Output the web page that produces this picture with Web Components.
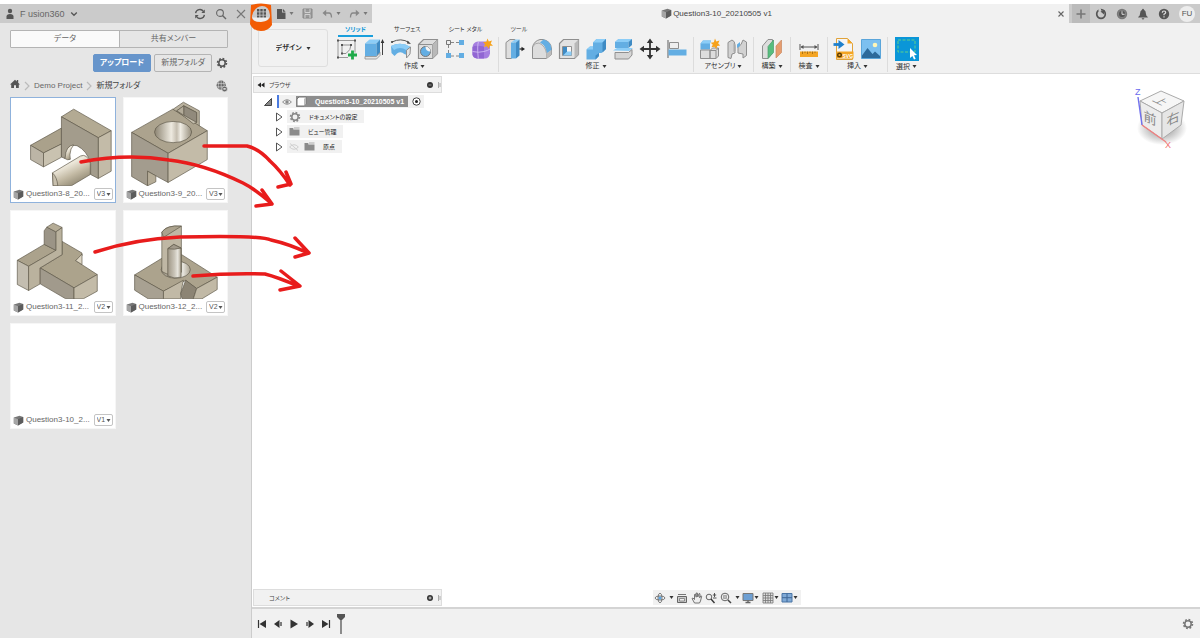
<!DOCTYPE html>
<html lang="ja">
<head>
<meta charset="utf-8">
<title>Question3-10_20210505 v1</title>
<style>
html, body {
	margin: 0;
	height: 100%;
}
body {
	font-family: "Liberation Sans", "Noto Sans CJK JP", sans-serif;
	font-size: 8px;
	line-height: 12px;
	font-feature-settings: "palt";
	color: #666;
	background: #fff;
	overflow: hidden;
}
</style>
</head>
<body>
<cad-app></cad-app>

<script>
const BASE = `
:host, * {
	box-sizing: border-box;
}
button, select {
	font: inherit;
	font-feature-settings: inherit;
	color: inherit;
	background: none;
	border: 0;
	padding: 0;
	margin: 0;
	appearance: none;
}
button {
	display: inline-flex;
	align-items: center;
	justify-content: center;
}
a {
	color: inherit;
	text-decoration: none;
}
`;

const g = '#8f8f8f';
const blue = '#63aee3';

// name: [width, height, markup]
const ICONS = {
	user: [10, 12, `<circle cx="5" cy="3" r="2.2" fill="#555"/><path d="M1.5 11V8.5Q1.5 6 5 6T8.5 8.5V11Z" fill="#555"/>`],
	chevron: [8, 8, `<path d="M1.2 2.5 4 5.3 6.8 2.5" fill="none" stroke="#555" stroke-width="1.3"/>`],
	caret: [5, 5, `<path d="M.5 1h4L2.5 4Z" fill="currentColor"/>`],
	refresh: [12, 12, `<path d="M1.6 5.2A4.3 4.3 0 0 1 9.4 3.4M10.4 6.8A4.3 4.3 0 0 1 2.6 8.6" fill="none" stroke="#555" stroke-width="1.3"/><path d="M10.8 1.5V5H7.3ZM1.2 10.5V7h3.5Z" fill="#555"/>`],
	search: [12, 12, `<circle cx="5" cy="5" r="3.4" fill="none" stroke="#666" stroke-width="1.1"/><path d="m7.5 7.5 3.5 3.5" stroke="#666" stroke-width="1.4"/>`],
	close: [10, 10, `<path d="m1 1 8 8M9 1 1 9" stroke="#777" stroke-width="1.1"/>`],
	tabclose: [8, 8, `<path d="m1.5 1.5 5 5M6.5 1.5l-5 5" stroke="#666" stroke-width="1.1"/>`],
	gear: [12, 12, `<g stroke="currentColor" fill="none"><circle cx="6" cy="6" r="4.4" stroke-width="1.7" stroke-dasharray="1.75 1.7"/><circle cx="6" cy="6" r="3.2" stroke-width="1.5"/></g>`],
	home: [10, 10, `<path d="M0 5.4 5 .8l1.8 1.6V1h1.4v2.8L10 5.4H8.8V9H6V6.2H4V9H1.2V5.4Z" fill="#555"/>`],
	sep: [6, 10, `<path d="m1 1 4 4-4 4" fill="none" stroke="#bbb" stroke-width="1.2"/>`],
	globe: [12, 12, `<circle cx="5.2" cy="5.2" r="4.6" fill="#666"/><path d="M.8 3.6h8.8M.8 6.8h8.8M5.2.6v9.2M3 1Q1.6 5.2 3 9.4M7.4 1Q8.8 5.2 7.4 9.4" stroke="#ddd" stroke-width=".6" fill="none"/><circle cx="8.6" cy="9" r="2.8" fill="#666" stroke="#e6e6e6" stroke-width=".6"/><path d="M6.8 9Q8.6 7.2 10.4 9 8.6 10.6 6.8 9Z" fill="#ddd"/>`],
	cube: [11, 11, `<path d="M.8 2.6 6.5.8 10.2 2v5.5L5 10.6.8 8.5Z" fill="#777"/><path d="M.8 2.6 5 4.2v6.4L.8 8.5Z" fill="#a5a5a5"/><path d="M5 4.2 10.2 2v5.5L5 10.6Z" fill="#5c5c5c"/>`],
	grid: [11, 11, `<path d="M1 1h2.4v2.4H1ZM4.3 1h2.4v2.4H4.3ZM7.6 1H10v2.4H7.6ZM1 4.3h2.4v2.4H1ZM4.3 4.3h2.4v2.4H4.3ZM7.6 4.3H10v2.4H7.6ZM1 7.6h2.4V10H1ZM4.3 7.6h2.4V10H4.3ZM7.6 7.6H10V10H7.6Z" fill="#555"/>`],
	file: [10, 12, `<path d="M1 1h5v3.5h3.500V11H1Z" fill="#555"/><path d="M6.8.8 9.6 3.7H6.8Z" fill="#555"/>`],
	save: [11, 11, `<path d="M1 1h9v9H1Z" fill="#9a9a9a" stroke="#888"/><path d="M3 1v3.500h5V1M3 10V6.500h5V10" fill="none" stroke="#d0d0d0"/>`],
	undo: [11, 10, `<path d="M2 4h5q2.500 0 2.500 4.500" fill="none" stroke="#888" stroke-width="1.3"/><path d="M.5 4 4.2.8v6.4Z" fill="#888"/>`],
	redo: [11, 10, `<path d="M9 4H4Q1.500 4 1.500 8.500" fill="none" stroke="#888" stroke-width="1.3"/><path d="M10.500 4 6.8.8v6.4Z" fill="#888"/>`],
	plus: [10, 10, `<path d="M5 .5v9M.5 5h9" stroke="#777" stroke-width="1.6"/>`],
	ext: [12, 12, `<circle cx="6" cy="6" r="4.3" fill="none" stroke="#555" stroke-width="1.7"/><path d="M3.500 1h2.500v2.500H3.500Z" fill="#cbcbcb"/><path d="M5.500 3.500 9.500 2l-.5 4.500Z" fill="#555"/>`],
	clock: [12, 12, `<circle cx="6" cy="6" r="5.2" fill="#777"/><circle cx="6" cy="6" r="3.7" fill="#555" stroke="#999" stroke-width=".6"/><path d="M6 3.2V6.3h2.6" fill="none" stroke="#ddd"/>`],
	bell: [12, 12, `<path d="M6 .8q.9 0 .9 1Q9 2.6 9 6q0 2 1.800 3v.6H1.200V9Q3 8 3 6q0-3.400 2.100-4.200Q5.100.8 6 .8ZM4.600 10.200h2.800Q7 11.400 6 11.400T4.600 10.200Z" fill="#555"/>`],
	help: [12, 12, `<circle cx="6" cy="6" r="5.2" fill="#555"/><path d="M4.300 4.800Q4.300 3 6 3t1.700 1.500Q7.700 5.500 6 6.300v.9" fill="none" stroke="#ddd" stroke-width="1.2"/><path d="M5.400 8.200h1.200v1.200H5.400Z" fill="#ddd"/>`],

	sketch: [22, 22, `<path d="M2 2.500h17v12M2 2.500v17h10" fill="none" stroke="${g}" stroke-width=".9"/><path d="M6 15.500V7h9q0 5-5 8.500H6" fill="none" stroke="${g}"/><path d="M1 1.500h2v2H1ZM18 1.500h2v2h-2ZM1 18.500h2v2H1ZM5 14.500h2v2H5ZM14 6h2v2h-2ZM5 6h2v2H5Z" fill="#555"/><path d="M16.500 12.500v9M12 17h9" stroke="#1faa4a" stroke-width="2.8"/>`],
	extrude: [22, 22, `<path d="M2 5.500 6.500 1.500H17l-3.500 4Z" fill="#8ccdf7"/><path d="M2 5.500h11.500v13H2Z" fill="${blue}"/><path d="m13.500 5.500 3.500-4v13l-3.500 4Z" fill="#3f8bc4"/><path d="M2 18.500h11.500l3.500-4v3L13.500 21H2Z" fill="#e4e4e4" stroke="${g}" stroke-width=".8"/><path d="M19.500 17V4" stroke="#444"/><path d="m19.500 1 1.800 4h-3.600Z" fill="#333"/>`],
	revolve: [22, 22, `<path d="M1 8Q11 3 20.500 9l-2.200 8.500-4-1.500Q11 13 7 15.500L4.500 18 1.500 15Z" fill="${blue}"/><path d="M1 8Q11 3 20.500 9l-4 3.200Q10 8 4 12Z" fill="#8ccdf7"/><path d="m16.500 12.200 4-3.200-.5 7-3.500 4Z" fill="#e5e5e5" stroke="${g}"/><path d="M2 4Q11-.5 19 4.500" fill="none" stroke="#555"/><circle cx="2" cy="4" r="1.1" fill="#444"/><path d="m17.500 2.500 3.500 3.500-4-.5Z" fill="#444"/>`],
	hole: [22, 22, `<path d="m1.500 6.500 5-5h14v14l-5 5h-14Z" fill="#ddd" stroke="${g}" stroke-width="1.2"/><path d="M1.500 6.500h14v14M15.500 6.500l5-5" fill="none" stroke="${g}"/><path d="m15.500 6.500 5-5v14l-5 5Z" fill="#b9b9b9"/><circle cx="8.500" cy="13.500" r="5" fill="${blue}" stroke="#777"/><path d="M8.500 8.500a5 5 0 0 1 5 5q-5 0-5-5Z" fill="#f4f4f4"/>`],
	pattern: [22, 22, `<path d="M6 4.500h10M4.500 6v11M6 18h10" stroke="#888" stroke-dasharray="4 2 4"/><path d="M2.500 2.500h4v4h-4Z" fill="#eee" stroke="#777"/><path d="M15 2h5v5h-5ZM2 15h5v5H2ZM15 15h5v5h-5Z" fill="${blue}"/>`],
	form: [22, 22, `<path d="M1.500 9Q2 4 7 3.500h8q4 .5 4 5v7q-1 5-5 5H6q-4-.5-4.500-4Z" fill="#a67fe0"/><path d="M1.500 9Q4 7 13 8.500v12H6q-4-.5-4.500-4Z" fill="#9166d3"/><path d="M1.500 13.500q6 1.500 11.500 0 4-1 6-2.500M7.500 3.500Q6 8 7.300 20.500M13 8.500q3-2 5-2" fill="none" stroke="#d7c4f6" stroke-width=".8"/><path d="m16.500.5 1.300 3 3.200-1-1.300 3 2.300 2.300h-3.200l-1 3-2-2.500-3.200.7 1.500-2.800-2-2 3.200-.5Z" fill="#f6a21b"/>`],
	press: [22, 22, `<path d="m2 4.500 4-3h5v16l-4 3H2Z" fill="#dedede" stroke="${g}"/><path d="M7 4.500h5v16H7Z" fill="${blue}"/><path d="m7 4.500 4-3h4.500l-3.500 3Z" fill="#8ccdf7"/><path d="m12 4.500 3.500-3v16l-3.500 3Z" fill="#3f8bc4"/><path d="M15.500 11H18" stroke="#222" stroke-width="1.2"/><path d="m21 11-3.500-2.300v4.600Z" fill="#222"/>`],
	fillet: [22, 22, `<path d="M1.500 9Q3 3 9 1.500h3Q20 3 20.500 11v5.500l-5 4h-14Z" fill="#ddd" stroke="${g}"/><path d="M9 4.500 12.500 1.500Q20 3 20.500 11v1l-5 3.500Q15.500 8 9 4.500Z" fill="${blue}"/><path d="M1.500 9Q4 4.500 8 5q6.500 3 7.500 10.500v5" fill="none" stroke="#aaa"/><path d="m15.500 15.500 5-3.500v4.500l-5 4Z" fill="#bcbcbc"/>`],
	shell: [22, 22, `<path d="m1.500 5.500 4-4h15v15l-4 4h-15Z" fill="#e2e2e2" stroke="${g}" stroke-width="1.2"/><path d="m16.500 5.500 4-4v15l-4 4Z" fill="#b9b9b9"/><path d="M4.500 8.500h9v9h-9Z" fill="#f7f7f7" stroke="${g}"/><path d="M5 9h4v4.500h4.500v4H5Z" fill="#8ccdf7"/><path d="M5 9v8.500l4-4V9Z" fill="#3f8bc4"/>`],
	combine: [22, 22, `<path d="M8 4.500 11.500 1H21v10l-4.500 4H14v3l-3.500 3.500H1.500v-10L5 8.500h3Z" fill="${blue}"/><path d="M8 4.500 11.500 1H21l-3.500 3.500ZM1.500 11.500 5 8.500h3v3Z" fill="#8ccdf7"/><path d="M17.500 4.500 21 1v10l-3.500 3.500ZM10.500 17.500 14 15v3l-3.500 3.500Z" fill="#3f8bc4"/>`],
	split: [22, 22, `<path d="m3 4 3.500-3H20l-3.500 3v6H3Z" fill="${blue}"/><path d="m3 4 3.500-3H20l-3.500 3Z" fill="#8ccdf7"/><path d="m16.500 4 3.500-3v6l-3.500 3Z" fill="#3f8bc4"/><path d="m1 12.500 4-2.500h16l-4 3Z" fill="#8ccdf7"/><path d="M3 14.500h13.500l3.500-3V17l-3.500 4H3Z" fill="#d6d6d6" stroke="${g}"/>`],
	move: [22, 22, `<path d="M11 3.500v15M3.500 11h15" stroke="#333" stroke-width="1.8"/><path d="m11 .5 3.200 4.500H7.800ZM11 21.500 7.800 17h6.400ZM.5 11 5 7.800v6.400ZM21.500 11 17 14.200V7.800Z" fill="#333"/>`],
	align: [22, 22, `<path d="M2 2v18" stroke="#777" stroke-width="1.2"/><path d="M3.500 4.500h9v6h-9Z" fill="#eee" stroke="${g}"/><path d="M2.500 11.500h18v6h-18Z" fill="${blue}"/>`],
	component: [22, 22, `<path d="m1.500 5.500 2.500-3h8l-1 3v6H1.500Z" fill="${blue}"/><path d="m1.500 5.500 2.500-3h8l-1 3Z" fill="#8ccdf7"/><path d="M1.500 12h9.500v8.500H1.500ZM11 12.500l2.500-2.500h6v8L17 20.500h-6Z" fill="#ddd" stroke="${g}"/><path d="M11 12.500h6l2.500-2.500M17 12.500v8" fill="none" stroke="${g}"/><path d="m16 .5 1.300 3 3.200-1-1.300 3 2 2-3 .5-.8 3-2-2.300-3 .6 1.400-2.600-2-2 3-.5Z" fill="#f6a21b"/>`],
	joint: [22, 22, `<path d="M2 4.500 6 2q3 1 3 5v8l-3 1-1 4.500-3-1Z" fill="#d2d2d2" stroke="${g}"/><path d="m12 9 3-2.500 2-4.500 3.500 2v13.500L17 20v-4l-5-1Z" fill="#d2d2d2" stroke="${g}"/><path d="M7.500 5q2 1 2 4v4l-2 1Z" fill="#aaa"/><path d="M11 6.500 14 4v4l-3 2Z" fill="${blue}"/>`],
	plane: [22, 22, `<path d="M1.500 8 7 1.500h4.500V15L7 20.500H1.500Z" fill="#ddd" stroke="${g}"/><path d="M7 8.500 12.500 2v12.500L7 20.500Z" fill="#57bd7e" stroke="#4a9e6b" stroke-width=".7"/><path d="m15 8 5.500-6v12.500L15 20Z" fill="#e79c6e" stroke="#c98860" stroke-width=".7"/>`],
	measure: [22, 22, `<path d="M2 6v6M20 6v6M3 9h16" stroke="#555" fill="none"/><path d="m2.500 9 3-2v4ZM19.500 9l-3-2v4Z" fill="#555"/><path d="M2 13.500h18V19H2Z" fill="#f4a524"/><path d="M4.500 13.500V16M7 13.500v1.500M9.500 13.500V16M12 13.500v1.500M14.500 13.500V16M17 13.500v1.500" stroke="#8a5c10" stroke-width=".7"/>`],
	svg: [22, 22, `<path d="M3.500.5h11l5 5v16h-16Z" fill="#f5f5f5" stroke="#e0a33a"/><path d="M14.500.5v5h5Z" fill="#f4a524"/><path d="M.5 6.500H6" stroke="#1f80cc" stroke-width="2.8"/><path d="m11.500 6.500-6-4.500v9Z" fill="#1f80cc"/><path d="M3.500 13.500h17v7h-17Z" fill="#f4a524"/><circle cx="6.500" cy="17" r="1.8" fill="none" stroke="#5c3c00" stroke-width="1.4"/><text x="9.500" y="19.500" font-size="5" font-weight="bold" font-family="Liberation Sans" fill="#fff">SVG</text>`],
	image: [22, 22, `<path d="M1.500 1.500h19v19h-19Z" fill="#7cc0f0" stroke="#5aa5da"/><circle cx="15" cy="7" r="2.3" fill="#fff6b8"/><path d="M2 17.500 7.500 10l5 6 2.500-2.500 5 4.500v2H2Z" fill="#2c6a9b"/>`],
	select: [24, 24, `<path d="M0 0h24v24H0Z" fill="#0a96d8"/><path d="M3 3h17v12H3Z" fill="none" stroke="#5ed08c" stroke-dasharray="3 1.5"/><path d="m15 11 7 7-3 .2 1.700 3.500-1.700.8-1.600-3.500-2.400 2Z" fill="#fff"/>`],

	rewind: [8, 8, `<path d="M4 1.500v5L.5 4ZM7.500 1.500v5L4 4Z" fill="#222"/>`],
	minus: [8, 8, `<circle cx="4" cy="4" r="3" fill="#333"/><path d="M2.500 4h3" stroke="#aaa" stroke-width=".8"/>`],
	add: [8, 8, `<circle cx="4" cy="4" r="3" fill="#333"/><path d="M2.500 4h3M4 2.500v3" stroke="#ddd" stroke-width=".9"/>`],
	grip: [4, 8, `<path d="M1.500 1v6M3 2v4" stroke="#999" stroke-width=".8"/>`],
	open: [10, 10, `<path d="M8.500 1.500v7h-7Z" fill="#888" stroke="#444"/>`],
	shut: [8, 10, `<path d="M1.500 1v8L7 5Z" fill="#fff" stroke="#555"/>`],
	eye: [10, 8, `<path d="M.6 4Q5-.6 9.400 4 5 8.600.6 4Z" fill="#eee" stroke="#888" stroke-width=".9"/><circle cx="5" cy="4" r="1.7" fill="#888"/>`],
	noeye: [10, 8, `<path d="M.6 4Q5-.6 9.400 4 5 8.600.6 4ZM1 .5l8 7" fill="none" stroke="#ccc" stroke-width=".9"/>`],
	part: [11, 11, `<path d="m1 3 2-2h7v7l-2 2H1Z" fill="#fff" stroke="#777"/><path d="M8 3v7l2-2V1Z" fill="#bbb"/>`],
	folder: [11, 9, `<path d="M.5 1h3.800v1.500H10.500V8.500H.5Z" fill="#8b8b8b"/><path d="M5 1h5.500" stroke="#aaa"/>`],
	target: [9, 9, `<circle cx="4.500" cy="4.500" r="3.700" fill="#fff" stroke="#444"/><circle cx="4.500" cy="4.500" r="1.500" fill="#222"/>`],

	orbit: [12, 12, `<ellipse cx="6" cy="6" rx="5" ry="2" fill="none" stroke="#777"/><ellipse cx="6" cy="6" rx="2" ry="4.800" fill="none" stroke="#777"/><path d="M4.500 6h3M6 4.500v3" stroke="#2d8fe0"/>`],
	look: [12, 12, `<path d="M1.500 4.500h9v6h-9Z" fill="#ccc" stroke="#666"/><path d="M3.500 6.500h5v2.500h-5Z" fill="#eee" stroke="#777" stroke-width=".8"/><path d="M2 2.500h8" stroke="#777"/>`],
	pan: [12, 12, `<path d="M3.500 11 1 6.500l1-.5 1.500 1.500V2.500l1-.3.700 3V1h1.100l.5 4L8 1.600l1 .2-.3 4 1.100-2 .9.500L9.500 9 8.500 11Z" fill="#eee" stroke="#555" stroke-width=".8"/>`],
	zoom: [12, 12, `<circle cx="4" cy="5" r="2.800" fill="#eee" stroke="#666"/><path d="m6 7 3.500 4" stroke="#333" stroke-width="1.400"/><path d="M9.500 1v4M7.800 3h3.400M8 6h3.500" stroke="#444" stroke-width=".9"/>`],
	fit: [12, 12, `<circle cx="5" cy="5" r="3.800" fill="#eee" stroke="#666"/><path d="M3.500 3.500h3v3h-3Z" fill="#bbb" stroke="#888" stroke-width=".6"/><path d="m8 8 3 3" stroke="#444" stroke-width="1.500"/>`],
	display: [12, 12, `<path d="M1 1.500h10v7H1Z" fill="#6d9fd3" stroke="#777"/><path d="M3.500 10.500h5M6 8.500v2" stroke="#666" stroke-width="1.400"/>`],
	gridnav: [12, 12, `<path d="M1 1h10v10H1Z" fill="#ddd"/><path d="M1 1h10v10H1ZM3.500 1v10M6 1v10M8.500 1v10M1 3.500h10M1 6h10M1 8.500h10" fill="none" stroke="#777" stroke-width=".8"/>`],
	views: [12, 12, `<path d="M1 1.500h10v8.500H1Z" fill="#7fa9d6" stroke="#4a74a5"/><path d="M6 1.500V10M1 5.700h10" stroke="#3f6797"/>`],

	first: [10, 12, `<path d="M1.500 2v8" stroke="#333" stroke-width="1.200"/><path d="M9 2v8L2.500 6Z" fill="#333"/>`],
	prev: [10, 12, `<path d="M6.500 2v8L1 6Z" fill="#333"/><path d="M8 4v4" stroke="#555" stroke-width="1.500"/>`],
	play: [10, 12, `<path d="M1.500 1.500v9L9 6Z" fill="#333"/>`],
	next: [10, 12, `<path d="M3.500 2v8L9 6Z" fill="#333"/><path d="M2 4v4" stroke="#555" stroke-width="1.500"/>`],
	last: [10, 12, `<path d="M8.500 2v8" stroke="#333" stroke-width="1.200"/><path d="M1 2v8l6.500-4Z" fill="#333"/>`],
	marker: [8, 20, `<path d="M0 0h8v3L5 6H3L0 3Z" fill="#555"/><path d="M4 5v15" stroke="#555" stroke-width="1.300"/>`]
};

class CadIcon extends HTMLElement {
	constructor() {
		super();
		this.attachShadow({mode: 'open'});
	}

	connectedCallback() {
		const [w, h, markup] = ICONS[this.getAttribute('name')];
		this.shadowRoot.innerHTML = `
		<style>
		:host { display: inline-flex; flex: none; }
		svg { display: block; }
		</style>
		<svg width="${w}" height="${h}" viewBox="0 0 ${w} ${h}" aria-hidden="true">${markup}</svg>
		`;
	}
}
customElements.define('cad-icon', CadIcon);

const MODELS = {
	bracket: `<svg viewBox="33 12 312 264">
		<defs><linearGradient id="c" x1="0" y1="0" x2=".6" y2="1"><stop offset="0" stop-color="#91876f"/><stop offset=".4" stop-color="#eee9dc"/><stop offset=".7" stop-color="#c2b9a3"/><stop offset="1" stop-color="#918974"/></linearGradient></defs>
		<path d="M92 154 185 102V150L131 177Z" fill="#aaa18b"/>
		<path d="m92 154 39 23v42l-39-22Z" fill="#bcb5a6"/>
		<path d="m131 177 54-27v40l-54 29Z" fill="#c9c2b0"/>
		<path d="m185 68 37-23 113 65-39 21Z" fill="#b3aa93"/>
		<path d="m296 131 39-21v122l-39 22Z" fill="#c3bba8"/>
		<path d="m185 68 111 63v123l-23-12v-34Q262 170 232 155 200 146 196 194l-11-5Z" fill="#a39c8c"/>
		<path d="M196 194Q198 153 222 153L214 165Q208 185 212 196Q204 200 196 194Z" fill="url(#c)"/>
		<path d="M158 237 243 186Q262 178 272 208V242L215 276H160Z" fill="url(#c)"/>
		<path d="M158 237Q172 250 174 276H160Z" fill="#c8c0ae"/></svg>`,
	block: `<svg viewBox="371 12 312 264">
		<defs><linearGradient id="c"><stop offset="0" stop-color="#8c8472"/><stop offset=".45" stop-color="#eeeae0"/><stop offset=".6" stop-color="#c5beb0"/><stop offset=".7" stop-color="#f0ede4"/><stop offset="1" stop-color="#958d7b"/></linearGradient></defs>
		<path d="m518 46 32-22 48 26v48l-20-10Z" fill="#b9b19e"/>
		<path d="m394 115 124-70 104 65-118 68Z" fill="#aca38e"/>
		<path d="m530 50 21-15 39 20v30l-10 4Z" fill="#c6bfae"/>
		<path d="m551 35 39 20v30l-39-22Z" fill="#918a7c"/>
		<path d="m530 50 21 13v-28Z" fill="#b4ac9a"/>
		<path d="m394 115 110 63v88l-37-20-25-14v44l-48-28Z" fill="#a39c8e"/>
		<path d="m504 178 118-68v87l-118 69Z" fill="#c3bba8"/>
		<path d="m442 232 25 14v18l-25 12Z" fill="#b6ad98"/>
		<ellipse cx="519" cy="114" rx="56" ry="32" fill="url(#c)"/></svg>`,
	stair: `<svg viewBox="33 21 312 264">
		<path d="m52 169 81-48 37 18-84 48Z" fill="#aba28c"/>
		<path d="m52 169 34 18v73l-34-18Z" fill="#c3bdb0"/>
		<path d="m121 192 66-40v-40l60 35v9l-19 14 65 42-70 40Z" fill="#aca38c"/>
		<path d="m86 187 82-48V83l19-13v82l-66 40v48l-35 20Z" fill="#bab29e"/>
		<path d="m133 80 8-11 27 14v56l-35-18Z" fill="#9b9486"/>
		<path d="m141 69 19-12 27 13-19 13Z" fill="#b5ac96"/>
		<path d="m121 192 102 60v33h-25l-77-45Z" fill="#a19a8c"/>
		<path d="m223 252 70-40v50l-42 23h-28Z" fill="#c3bba8"/>
		<path d="m228 170 19-20v32Z" fill="#ded6c4"/></svg>`,
	post: `<svg viewBox="371 21 312 264">
		<defs><linearGradient id="c"><stop offset="0" stop-color="#9e9685"/><stop offset=".5" stop-color="#c9c4b8"/><stop offset=".75" stop-color="#e7e5dd"/><stop offset="1" stop-color="#aaa290"/></linearGradient></defs>
		<path d="m403 213 82-50 60-11 107 68-62 34-33-24-68 32Z" fill="#aca38d"/>
		<path d="m403 213 87 49v23h-46l-41-26Z" fill="#a8a192"/>
		<path d="m490 262 60-33-8 40v16h-52Z" fill="#c1b9a6"/>
		<path d="m557 229 33 25-10 31h-34l-4-16Z" fill="#8c8474"/>
		<path d="m590 254 62-34v37l-46 28h-26Z" fill="#c1b9a6"/>
		<ellipse cx="527" cy="197" rx="44" ry="26" fill="url(#c)"/>
		<path d="M485 84Q500 62 544 66V205L510 213Q486 206 485 200Z" fill="#bfb7a4"/>
		<path d="M485 84Q500 62 544 66L490 100Z" fill="#aba28d"/>
		<path d="m503 134 18-13 22 11v88q-22 6-40-4Z" fill="url(#c)"/>
		<path d="m503 134 18-13 22 11q-20 6-40 2Z" fill="#a1998a"/></svg>`,
	none: ''
};

class ModelCard extends HTMLElement {
	constructor() {
		super();
		this.attachShadow({mode: 'open'});
	}

	connectedCallback() {
		const version = this.getAttribute('version');
		this.shadowRoot.innerHTML = `
		<style>
		${BASE}
		:host {
			display: flex;
			flex-direction: column;
			height: 106px;
			background: #fff;
			border: 1px solid #f6f6f6;
		}
		:host([selected]) { border-color: #8fb2dc; }
		.preview { height: 88px; }
		.preview svg {
			display: block;
			width: 100%;
			height: 88px;
			stroke: #5d5648;
			stroke-width: 2;
			stroke-linejoin: round;
		}
		footer {
			display: flex;
			align-items: center;
			gap: 2px;
			height: 16px;
			padding: 0 2px;
		}
		a { flex: 1; white-space: nowrap; }
		label {
			display: flex;
			align-items: center;
			height: 12px;
			padding: 0 1px 0 2px;
			border: 1px solid #c4c4c4;
			border-radius: 2px;
			font-size: 7px;
			color: #555;
		}
		select { line-height: 10px; }
		</style>
		<div class="preview">${MODELS[this.getAttribute('model')]}</div>
		<footer>
			<cad-icon name="cube"></cad-icon>
			<a href="#"><slot></slot></a>
			<label><select aria-label="バージョン"><option>${version}</option></select><cad-icon name="caret"></cad-icon></label>
		</footer>
		`;
	}
}
customElements.define('model-card', ModelCard);

class DataPanel extends HTMLElement {
	constructor() {
		super();
		this.attachShadow({mode: 'open'}).innerHTML = `
		<style>
		${BASE}
		:host {
			display: block;
			background: #e6e6e6;
			border-right: 1px solid #ccc;
		}
		header {
			display: flex;
			align-items: center;
			gap: 5px;
			height: 19px;
			padding: 0 5px;
			background: #cbcbcb;
			font-size: 9px;
		}
		header .actions {
			display: flex;
			align-items: center;
			gap: 9px;
			margin-left: auto;
		}
		.body { padding: 7px 23px 0 10px; }
		.switch {
			display: grid;
			grid-template-columns: 1fr 1fr;
			height: 18px;
			border: 1px solid #b4b4b4;
			border-radius: 1px;
		}
		.switch button + button { border-left: 1px solid #b4b4b4; }
		.switch .on { background: #fafafa; }
		.actions-row {
			display: flex;
			justify-content: flex-end;
			align-items: center;
			gap: 3px;
			margin-top: 6px;
		}
		.actions-row button {
			height: 18px;
			padding: 0 6px;
			border: 1px solid #b4b4b4;
			border-radius: 2px;
		}
		.actions-row .primary {
			background: #6795cb;
			border-color: #6795cb;
			color: #fff;
			font-weight: bold;
		}
		.actions-row .gear { border: 0; padding: 0 0 0 1px; color: #555; }
		nav {
			display: flex;
			align-items: center;
			gap: 4px;
			height: 12px;
			margin: 8px 0 5px;
		}
		nav .here { color: #444; }
		nav .globe { margin-left: auto; }
		.cards {
			display: grid;
			grid-template-columns: 1fr 1fr;
			gap: 7px;
		}
		</style>
		<header>
			<cad-icon name="user"></cad-icon>
			<span>F usion360</span>
			<cad-icon name="chevron"></cad-icon>
			<div class="actions">
				<button aria-label="更新"><cad-icon name="refresh"></cad-icon></button>
				<button aria-label="検索"><cad-icon name="search"></cad-icon></button>
				<button aria-label="閉じる"><cad-icon name="close"></cad-icon></button>
			</div>
		</header>
		<div class="body">
			<div class="switch"><button class="on">データ</button><button>共有メンバー</button></div>
			<div class="actions-row">
				<button class="primary">アップロード</button>
				<button>新規フォルダ</button>
				<button class="gear" aria-label="設定"><cad-icon name="gear"></cad-icon></button>
			</div>
			<nav>
				<a href="#" aria-label="ホーム"><cad-icon name="home"></cad-icon></a>
				<cad-icon name="sep"></cad-icon>
				<a href="#">Demo Project</a>
				<cad-icon name="sep"></cad-icon>
				<a href="#" class="here">新規フォルダ</a>
				<cad-icon class="globe" name="globe"></cad-icon>
			</nav>
			<div class="cards">
				<model-card model="bracket" version="V3" selected>Question3-8_20...</model-card>
				<model-card model="block" version="V3">Question3-9_20...</model-card>
				<model-card model="stair" version="V2">Question3-11_2...</model-card>
				<model-card model="post" version="V2">Question3-12_2...</model-card>
				<model-card model="none" version="V1">Question3-10_2...</model-card>
			</div>
		</div>
		`;
	}
}
customElements.define('data-panel', DataPanel);

class TitleBar extends HTMLElement {
	constructor() {
		super();
		this.attachShadow({mode: 'open'}).innerHTML = `
		<style>
		${BASE}
		:host {
			display: flex;
			height: 19px;
			background: #cbcbcb;
			color: #777;
		}
		.quick {
			display: flex;
			align-items: center;
			justify-content: space-between;
			width: 120px;
			padding: 0 4px;
		}
		.quick button { gap: 3px; }
		.doc {
			flex: 1;
			display: flex;
			align-items: center;
			padding: 0 4px;
			background: #f1f1f1;
			color: #444;
		}
		.doc span {
			flex: 1;
			display: flex;
			align-items: center;
			justify-content: center;
			gap: 1px;
		}
		.new { width: 18px; margin: 0 5px 0 3px; background: #bbb; }
		.right {
			display: flex;
			align-items: center;
			gap: 9px;
			padding-right: 5px;
		}
		.avatar {
			width: 16px;
			height: 16px;
			border-radius: 50%;
			background: #ededed;
			color: #555;
		}
		</style>
		<div class="quick">
			<button aria-label="データ パネル"><cad-icon name="grid"></cad-icon></button>
			<button aria-label="ファイル"><cad-icon name="file"></cad-icon><cad-icon name="caret"></cad-icon></button>
			<button aria-label="保存"><cad-icon name="save"></cad-icon></button>
			<button aria-label="元に戻す"><cad-icon name="undo"></cad-icon><cad-icon name="caret"></cad-icon></button>
			<button aria-label="やり直し"><cad-icon name="redo"></cad-icon><cad-icon name="caret"></cad-icon></button>
		</div>
		<div class="doc">
			<span><cad-icon name="cube"></cad-icon>Question3-10_20210505 v1</span>
			<button aria-label="タブを閉じる"><cad-icon name="tabclose"></cad-icon></button>
		</div>
		<button class="new" aria-label="新規"><cad-icon name="plus"></cad-icon></button>
		<div class="right">
			<button aria-label="拡張機能"><cad-icon name="ext"></cad-icon></button>
			<button aria-label="ジョブ"><cad-icon name="clock"></cad-icon></button>
			<button aria-label="通知"><cad-icon name="bell"></cad-icon></button>
			<button aria-label="ヘルプ"><cad-icon name="help"></cad-icon></button>
			<button class="avatar">FU</button>
		</div>
		`;
	}
}
customElements.define('title-bar', TitleBar);

class ToolGroup extends HTMLElement {
	constructor() {
		super();
		this.attachShadow({mode: 'open'});
	}

	connectedCallback() {
		const icons = this.getAttribute('icons').split(' ');
		this.shadowRoot.innerHTML = `
		<style>
		${BASE}
		:host {
			display: flex;
			flex-direction: column;
			align-items: center;
			min-width: 37px;
			height: 35px;
			padding: 0 5px;
			border-right: 1px solid #dcdcdc;
		}
		:host(:last-of-type) { border: 0; }
		.icons { display: flex; align-items: center; gap: 5px; height: 24px; }
		.label { gap: 2px; height: 12px; color: #333; white-space: nowrap; }
		</style>
		<div class="icons">${icons.map(i => `<button aria-label="${i}"><cad-icon name="${i}"></cad-icon></button>`).join('')}</div>
		<button class="label"><slot></slot><cad-icon name="caret"></cad-icon></button>
		`;
	}
}
customElements.define('tool-group', ToolGroup);

class ToolRibbon extends HTMLElement {
	constructor() {
		super();
		this.attachShadow({mode: 'open'}).innerHTML = `
		<style>
		${BASE}
		:host {
			display: flex;
			height: 51px;
			padding-left: 6px;
			background: #f1f1f1;
			border-bottom: 1px solid #ddd;
			font-size: 7px;
			line-height: 10px;
			color: #333;
		}
		.workspace {
			display: flex;
			align-items: center;
			justify-content: center;
			gap: 3px;
			width: 70px;
			height: 38px;
			margin: 6px 3px 0 0;
			border: 1px solid #dedede;
			border-radius: 3px;
			font-weight: bold;
		}
		.tabs {
			display: flex;
			gap: 14px;
			height: 14px;
			padding-left: 7px;
			font-size: 6px;
		}
		.tabs button {
			padding: 0 7px;
			border-bottom: 2px solid transparent;
			white-space: nowrap;
		}
		.tabs .on {
			color: #0a96d8;
			font-weight: bold;
			border-color: #1a9fdc;
		}
		.groups { display: flex; }
		</style>
		<label class="workspace"><select aria-label="作業スペース"><option>デザイン</option></select><cad-icon name="caret"></cad-icon></label>
		<div>
			<div class="tabs">
				<button class="on">ソリッド</button>
				<button>サーフェス</button>
				<button>シート メタル</button>
				<button>ツール</button>
			</div>
			<div class="groups">
				<tool-group icons="sketch extrude revolve hole pattern form">作成</tool-group>
				<tool-group icons="press fillet shell combine split move align">修正</tool-group>
				<tool-group icons="component joint">アセンブリ</tool-group>
				<tool-group icons="plane">構築</tool-group>
				<tool-group icons="measure">検査</tool-group>
				<tool-group icons="svg image">挿入</tool-group>
				<tool-group icons="select">選択</tool-group>
			</div>
		</div>
		`;
	}
}
customElements.define('tool-ribbon', ToolRibbon);

class DockBar extends HTMLElement {
	constructor() {
		super();
		this.attachShadow({mode: 'open'});
	}

	connectedCallback() {
		const lead = this.getAttribute('lead');
		this.shadowRoot.innerHTML = `
		<style>
		${BASE}
		:host {
			display: flex;
			align-items: center;
			gap: 3px;
			width: 189px;
			height: 17px;
			padding: 0 0 0 3px;
			background: #f1f1f1;
			border: 1px solid #ddd;
			font-size: 6px;
			color: #444;
		}
		.lead { width: 8px; margin-right: 1px; }
		.name { flex: 1; }
		</style>
		<button class="lead" aria-label="折りたたむ">${lead ? `<cad-icon name="${lead}"></cad-icon>` : ''}</button>
		<span class="name"><slot></slot></span>
		<button aria-label="表示"><cad-icon name="${this.getAttribute('end')}"></cad-icon></button>
		<cad-icon name="grip"></cad-icon>
		`;
	}
}
customElements.define('dock-bar', DockBar);

class BrowserTree extends HTMLElement {
	constructor() {
		super();
		this.attachShadow({mode: 'open'}).innerHTML = `
		<style>
		${BASE}
		:host {
			display: block;
			padding: 1px 0 0 10px;
			font-size: 6px;
			color: #222;
		}
		.row {
			display: flex;
			align-items: center;
			gap: 4px;
			height: 15px;
		}
		.child { padding-left: 12px; }
		.cell {
			display: flex;
			align-items: center;
			gap: 5px;
			height: 13px;
			padding: 0 7px 0 2px;
			background: #f1f1f1;
		}
		.cell span { padding-left: 3px; }
		.root {
			gap: 4px;
			padding: 0 3px;
			border-left: 2px solid #4a7be0;
		}
		.chosen {
			display: flex;
			align-items: center;
			gap: 5px;
			height: 11px;
			padding-right: 4px;
			background: #8d8d8d;
			color: #fff;
			font-size: 7px;
			font-weight: bold;
		}
		</style>
		<div class="row">
			<cad-icon name="open"></cad-icon>
			<div class="cell root">
				<cad-icon name="eye"></cad-icon>
				<div class="chosen"><cad-icon name="part"></cad-icon><span>Question3-10_20210505 v1</span></div>
				<cad-icon name="target"></cad-icon>
			</div>
		</div>
		<div class="row child">
			<cad-icon name="shut"></cad-icon>
			<div class="cell"><cad-icon name="gear" style="color:#888"></cad-icon><span>ドキュメントの設定</span></div>
		</div>
		<div class="row child">
			<cad-icon name="shut"></cad-icon>
			<div class="cell"><cad-icon name="folder"></cad-icon><span>ビュー管理</span></div>
		</div>
		<div class="row child">
			<cad-icon name="shut"></cad-icon>
			<div class="cell"><cad-icon name="noeye"></cad-icon><cad-icon name="folder"></cad-icon><span>原点</span></div>
		</div>
		`;
	}
}
customElements.define('browser-tree', BrowserTree);

class ViewCube extends HTMLElement {
	constructor() {
		super();
		this.attachShadow({mode: 'open'}).innerHTML = `
		<style>
		:host { display: block; width: 70px; height: 70px; }
		svg { display: block; font-family: "Noto Sans CJK JP", sans-serif; }
		</style>
		<svg width="70" height="70" viewBox="1130 84 70 70">
			<defs><radialGradient id="s"><stop offset=".5" stop-color="#999" stop-opacity=".6"/><stop offset="1" stop-color="#999" stop-opacity="0"/></radialGradient></defs>
			<ellipse cx="1162" cy="128" rx="25" ry="17" fill="url(#s)"/>
			<g stroke="#aaa" stroke-linejoin="round">
				<path d="m1140 101 21-10 23 10-22 12Z" fill="#f6f6f6"/>
				<path d="m1140 101 22 12v26l-20-14Z" fill="#ececec"/>
				<path d="m1184 101-22 12v26l19-14Z" fill="#e6e6e6"/>
			</g>
			<g font-size="13" fill="#888" text-anchor="middle">
				<text transform="translate(1150 123) skewY(24)">前</text>
				<text transform="translate(1173 123) skewY(-24)">右</text>
				<text transform="matrix(.8 .4 -.8 .4 1157 103)">上</text>
			</g>
			<path d="m1138 97 4 28" stroke="#7070ee" stroke-width="1.4"/>
			<path d="m1142 125 24 17" stroke="#f08080" stroke-width="1.4"/>
			<g font-family="Liberation Sans" font-size="9">
				<text x="1135" y="95" fill="#6a6aee">Z</text>
				<text x="1165" y="148" fill="#f07070">X</text>
			</g>
		</svg>
		`;
	}
}
customElements.define('view-cube', ViewCube);

class NavBar extends HTMLElement {
	constructor() {
		super();
		this.attachShadow({mode: 'open'}).innerHTML = `
		<style>
		${BASE}
		:host {
			display: flex;
			align-items: center;
			justify-content: space-between;
			width: 148px;
			height: 15px;
			padding: 0 2px 0 1px;
			background: #f1f1f1;
			color: #333;
		}
		.wide { gap: 3px; }
		</style>
		<button class="wide" aria-label="オービット"><cad-icon name="orbit"></cad-icon><cad-icon name="caret"></cad-icon></button>
		<button aria-label="ビュー正面"><cad-icon name="look"></cad-icon></button>
		<button aria-label="画面移動"><cad-icon name="pan"></cad-icon></button>
		<button aria-label="ズーム"><cad-icon name="zoom"></cad-icon></button>
		<button class="wide" aria-label="フィット"><cad-icon name="fit"></cad-icon><cad-icon name="caret"></cad-icon></button>
		<button aria-label="表示設定"><cad-icon name="display"></cad-icon><cad-icon name="caret"></cad-icon></button>
		<button aria-label="グリッド"><cad-icon name="gridnav"></cad-icon><cad-icon name="caret"></cad-icon></button>
		<button aria-label="ビューポート"><cad-icon name="views"></cad-icon><cad-icon name="caret"></cad-icon></button>
		`;
	}
}
customElements.define('nav-bar', NavBar);

class TimeLine extends HTMLElement {
	constructor() {
		super();
		this.attachShadow({mode: 'open'}).innerHTML = `
		<style>
		${BASE}
		:host {
			display: flex;
			align-items: center;
			gap: 6px;
			height: 31px;
			padding: 0 6px 0 5px;
			background: #f1f1f1;
			border-top: 2px solid #d4d4d4;
			color: #777;
		}
		.settings { margin-left: auto; }
		</style>
		<button aria-label="最初へ"><cad-icon name="first"></cad-icon></button>
		<button aria-label="前へ"><cad-icon name="prev"></cad-icon></button>
		<button aria-label="再生"><cad-icon name="play"></cad-icon></button>
		<button aria-label="次へ"><cad-icon name="next"></cad-icon></button>
		<button aria-label="最後へ"><cad-icon name="last"></cad-icon></button>
		<cad-icon name="marker"></cad-icon>
		<button class="settings" aria-label="設定"><cad-icon name="gear"></cad-icon></button>
		`;
	}
}
customElements.define('time-line', TimeLine);

// hand-drawn marks lying over the whole window
class InkLayer extends HTMLElement {
	constructor() {
		super();
		this.attachShadow({mode: 'open'}).innerHTML = `
		<style>
		:host {
			position: absolute;
			top: 0;
			left: 0;
			pointer-events: none;
		}
		svg { display: block; }
		</style>
		<svg width="330" height="310" viewBox="0 0 330 310" fill="none" stroke-linecap="round" stroke-linejoin="round">
			<path d="M252 17.500h17l-3 4q-6 2-11 0Z" fill="#efefef"/>
			<path d="M251 5q10-3 20 0l1 20q-4 6-11 6-8 0-11-7Zm1 11q-1 6 9 6 10-1 9-7-1-9-8-9-8 1-10 10Z" fill="#f25c05" fill-rule="evenodd"/>
			<g stroke="#e81c1c" stroke-width="3.5">
				<path d="M204 146h43q12 3 23 15 10 9 20 24M286 172l5 12-13 3"/>
				<path d="M81 162q46-9 88-2 35 4 74 23 12 6 28 20M262 190l10 14-16 2"/>
				<path d="M95 252q40-13 85-15 80-2 91 3 18 4 37 13M295 238l14 15-14 4"/>
				<path d="M193 276q36-3 72-2 12 3 33 12M281 271l19 15-20 4"/>
			</g>
		</svg>
		`;
	}
}
customElements.define('ink-layer', InkLayer);

class CadApp extends HTMLElement {
	constructor() {
		super();
		this.attachShadow({mode: 'open'}).innerHTML = `
		<style>
		${BASE}
		:host {
			display: grid;
			grid-template-columns: 252px 1fr;
			position: relative;
			height: 100vh;
			padding-top: 4px;
		}
		main {
			display: flex;
			flex-direction: column;
			min-width: 0;
		}
		.canvas {
			flex: 1;
			display: flex;
			flex-direction: column;
			justify-content: space-between;
			padding: 2px 0 1px 1px;
		}
		.top {
			display: flex;
			justify-content: space-between;
			align-items: flex-start;
		}
		view-cube { margin-top: 8px; }
		.bottom {
			display: grid;
			grid-template-columns: 1fr auto 1fr;
			align-items: center;
		}
		</style>
		<data-panel></data-panel>
		<main>
			<title-bar></title-bar>
			<tool-ribbon></tool-ribbon>
			<div class="canvas">
				<div class="top">
					<div>
						<dock-bar lead="rewind" end="minus">ブラウザ</dock-bar>
						<browser-tree></browser-tree>
					</div>
					<view-cube></view-cube>
				</div>
				<div class="bottom">
					<dock-bar end="add">コメント</dock-bar>
					<nav-bar></nav-bar>
				</div>
			</div>
			<time-line></time-line>
		</main>
		<ink-layer></ink-layer>
		`;
	}
}
customElements.define('cad-app', CadApp);
</script>
</body>
</html>
